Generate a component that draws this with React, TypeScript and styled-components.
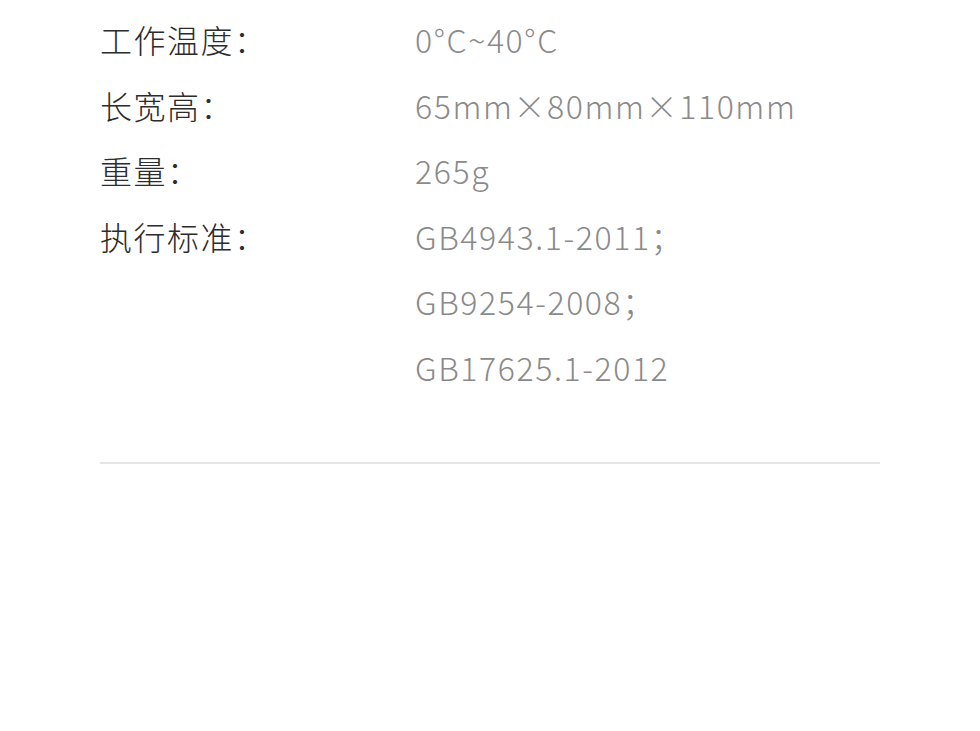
import styled, { createGlobalStyle } from "styled-components";

const GlobalStyle = createGlobalStyle`
  html, body {
    margin: 0;
    padding: 0;
    background: #ffffff;
  }
  body {
    font-family: "Noto Sans CJK SC", "Noto Sans", sans-serif;
  }
`;

const Wrapper = styled.div`
  width: 980px;
  height: 731px;
  overflow: hidden;
  padding: 7px 100px 0;
  box-sizing: border-box;
`;

const SpecList = styled.div`
  display: grid;
  grid-template-columns: 315px 1fr;
  grid-auto-rows: 65.5px;
`;

const Label = styled.div`
  font-size: 32px;
  line-height: 65.5px;
  letter-spacing: 1.5px;
  color: #2c2c2c;
  font-weight: 300;
`;

const Value = styled.div`
  font-size: 32px;
  line-height: 65.5px;
  letter-spacing: 1.6px;
  color: #8a8a8a;
  font-weight: 300;
  white-space: nowrap;
`;

const Divider = styled.hr`
  margin: 62px 0 0;
  border: none;
  height: 2px;
  background: #e6e6e6;
`;

const specs: { label: string; values: string[] }[] = [
  { label: "工作温度：", values: ["0°C~40°C"] },
  { label: "长宽高：", values: ["65mm×80mm×110mm"] },
  { label: "重量：", values: ["265g"] },
  {
    label: "执行标准：",
    values: ["GB4943.1-2011；", "GB9254-2008；", "GB17625.1-2012"],
  },
];

export default function App() {
  return (
    <>
      <GlobalStyle />
      <Wrapper>
        <SpecList>
          {specs.flatMap((spec) =>
            spec.values.flatMap((v, i) => [
              <Label key={`l-${v}`}>{i === 0 ? spec.label : ""}</Label>,
              <Value key={`v-${v}`}>{v}</Value>,
            ])
          )}
        </SpecList>
        <Divider />
      </Wrapper>
    </>
  );
}
